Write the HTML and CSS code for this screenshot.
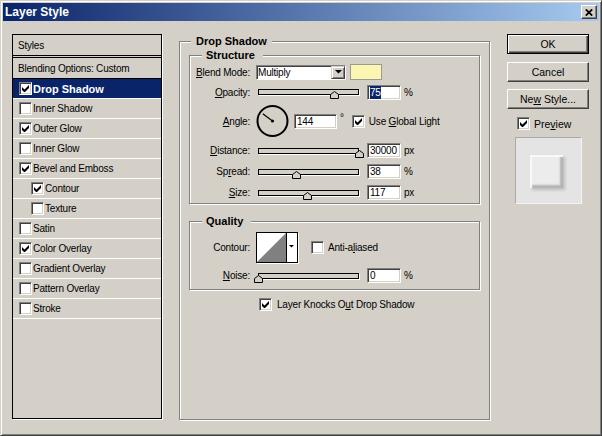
FILE: index.html
```html
<!DOCTYPE html>
<html>
<head>
<meta charset="utf-8">
<title>Layer Style</title>
<link rel="stylesheet" href="styles.css">
</head>
<body>
<div class="window">
  <div class="titlebar">
    <span class="title">Layer Style</span>
    <span class="closebtn"><svg width="8" height="7" viewBox="0 0 8 7"><path d="M0.8 0.4 L7.2 6.6 M7.2 0.4 L0.8 6.6" stroke="#000" stroke-width="1.8"/></svg></span>
  </div>
  <div class="content">
    <div class="list">
      <div class="li head">Styles</div>
      <div class="li blend">Blending Options: Custom</div>
      <div class="li sel"><span class="cb"><svg class="chk" width="7" height="7" viewBox="0 0 7 7"><path d="M0 2 L2.5 4.5 L7 0 L7 3 L2.5 7.5 L0 5 Z"/></svg></span><span>Drop Shadow</span></div>
      <div class="li"><span class="cb"></span><span>Inner Shadow</span></div>
      <div class="li"><span class="cb"><svg class="chk" width="7" height="7" viewBox="0 0 7 7"><path d="M0 2 L2.5 4.5 L7 0 L7 3 L2.5 7.5 L0 5 Z"/></svg></span><span>Outer Glow</span></div>
      <div class="li"><span class="cb"></span><span>Inner Glow</span></div>
      <div class="li"><span class="cb"><svg class="chk" width="7" height="7" viewBox="0 0 7 7"><path d="M0 2 L2.5 4.5 L7 0 L7 3 L2.5 7.5 L0 5 Z"/></svg></span><span>Bevel and Emboss</span></div>
      <div class="li sub"><span class="cb"><svg class="chk" width="7" height="7" viewBox="0 0 7 7"><path d="M0 2 L2.5 4.5 L7 0 L7 3 L2.5 7.5 L0 5 Z"/></svg></span><span>Contour</span></div>
      <div class="li sub"><span class="cb"></span><span>Texture</span></div>
      <div class="li"><span class="cb"></span><span>Satin</span></div>
      <div class="li"><span class="cb"><svg class="chk" width="7" height="7" viewBox="0 0 7 7"><path d="M0 2 L2.5 4.5 L7 0 L7 3 L2.5 7.5 L0 5 Z"/></svg></span><span>Color Overlay</span></div>
      <div class="li"><span class="cb"></span><span>Gradient Overlay</span></div>
      <div class="li"><span class="cb"></span><span>Pattern Overlay</span></div>
      <div class="li"><span class="cb"></span><span>Stroke</span></div>
    </div>

    <div class="group outer">
      <div class="legend">Drop Shadow</div>

      <div class="group inner structure">
        <div class="legend">Structure</div>
        <div class="rows">
          <div class="row h16">
            <span class="lbl"><u>B</u>lend Mode:</span>
            <div class="select"><span>Multiply</span><span class="dd"><svg width="7" height="4" viewBox="0 0 7 4"><path d="M0 0 H7 L3.5 3.5 Z"/></svg></span></div>
            <div class="swatch"></div>
          </div>
          <div class="row h16">
            <span class="lbl"><u>O</u>pacity:</span>
            <div class="slider"><div class="track"></div><svg class="thumb" style="left:75%" width="9" height="8" viewBox="0 0 9 8"><path d="M0.5 7.5 V3.5 L4.5 0.5 L8.5 3.5 V7.5 Z" fill="#d4d0c8" stroke="#000"/></svg></div>
            <div class="inp"><span class="hl">75</span></div>
            <span class="unit">%</span>
          </div>
          <div class="row h34">
            <span class="lbl"><u>A</u>ngle:</span>
            <svg class="dial" width="33" height="34" viewBox="0 0 33 34"><circle cx="16.5" cy="17" r="15" fill="none" stroke="#000" stroke-width="2"/><line x1="16.5" y1="17" x2="6.8" y2="9.8" stroke="#000" stroke-width="1.2"/><circle cx="16.5" cy="17" r="1.6"/></svg>
            <div class="inp wide">144</div>
            <span class="deg">°</span>
            <span class="cb gl"><svg class="chk" width="7" height="7" viewBox="0 0 7 7"><path d="M0 2 L2.5 4.5 L7 0 L7 3 L2.5 7.5 L0 5 Z"/></svg></span>
            <span class="cbtext">Use <u>G</u>lobal Light</span>
          </div>
          <div class="row h17">
            <span class="lbl"><u>D</u>istance:</span>
            <div class="slider"><div class="track"></div><svg class="thumb" style="left:100%" width="9" height="8" viewBox="0 0 9 8"><path d="M0.5 7.5 V3.5 L4.5 0.5 L8.5 3.5 V7.5 Z" fill="#d4d0c8" stroke="#000"/></svg></div>
            <div class="inp">30000</div>
            <span class="unit">px</span>
          </div>
          <div class="row h17">
            <span class="lbl">Sp<u>r</u>ead:</span>
            <div class="slider"><div class="track"></div><svg class="thumb" style="left:38%" width="9" height="8" viewBox="0 0 9 8"><path d="M0.5 7.5 V3.5 L4.5 0.5 L8.5 3.5 V7.5 Z" fill="#d4d0c8" stroke="#000"/></svg></div>
            <div class="inp">38</div>
            <span class="unit">%</span>
          </div>
          <div class="row h17">
            <span class="lbl"><u>S</u>ize:</span>
            <div class="slider"><div class="track"></div><svg class="thumb" style="left:49%" width="9" height="8" viewBox="0 0 9 8"><path d="M0.5 7.5 V3.5 L4.5 0.5 L8.5 3.5 V7.5 Z" fill="#d4d0c8" stroke="#000"/></svg></div>
            <div class="inp">117</div>
            <span class="unit">px</span>
          </div>
        </div>
      </div>

      <div class="group inner quality">
        <div class="legend">Quality</div>
        <div class="row h31 first">
          <span class="lbl">Contour:</span>
          <svg class="contour" width="42" height="31" viewBox="0 0 42 31"><rect x="0.5" y="0.5" width="41" height="30" fill="#fff" stroke="#000"/><path d="M1 30 L30 1 V30 Z" fill="#808080"/><line x1="30.5" y1="0" x2="30.5" y2="31" stroke="#000"/><path d="M33 13 H38 L35.5 15.5 Z"/></svg>
          <span class="cb aa"></span>
          <span class="cbtext">Anti-a<u>l</u>iased</span>
        </div>
        <div class="row h17 second">
          <span class="lbl"><u>N</u>oise:</span>
          <div class="slider"><div class="track"></div><svg class="thumb" style="left:0%" width="9" height="8" viewBox="0 0 9 8"><path d="M0.5 7.5 V3.5 L4.5 0.5 L8.5 3.5 V7.5 Z" fill="#d4d0c8" stroke="#000"/></svg></div>
          <div class="inp">0</div>
          <span class="unit">%</span>
        </div>
      </div>

      <div class="knock">
        <span class="cb"><svg class="chk" width="7" height="7" viewBox="0 0 7 7"><path d="M0 2 L2.5 4.5 L7 0 L7 3 L2.5 7.5 L0 5 Z"/></svg></span>
        <span class="cbtext k">Layer Knocks O<u>u</u>t Drop Shadow</span>
      </div>
    </div>

    <div class="side">
      <div class="btn default">OK</div>
      <div class="btn b2">Cancel</div>
      <div class="btn b3"><span>Ne<u>w</u>&nbsp;Style...</span></div>
      <div class="prevrow">
        <span class="cb"><svg class="chk" width="7" height="7" viewBox="0 0 7 7"><path d="M0 2 L2.5 4.5 L7 0 L7 3 L2.5 7.5 L0 5 Z"/></svg></span>
        <span class="cbtext">Pre<u>v</u>iew</span>
      </div>
      <div class="preview"><div class="pvsq"></div></div>
    </div>
  </div>
</div>
</body>
</html>
```

FILE: styles.css
```css
* { box-sizing: border-box; }
html, body { margin: 0; padding: 0; background: #d4d0c8; }
body {
  font-family: "Liberation Sans", Arial, sans-serif;
  font-size: 10px;
  letter-spacing: -0.2px;
  color: #000;
}
u { text-decoration: underline; text-underline-offset: 1px; }

.window {
  width: 602px;
  height: 436px;
  background: #d4d0c8;
  border: 1px solid;
  border-color: #d4d0c8 #404040 #404040 #d4d0c8;
  box-shadow: inset 1px 1px 0 #fff, inset -1px -1px 0 #808080;
  padding: 2px 2px 0 2px;
}

.titlebar {
  height: 18px;
  display: flex;
  align-items: center;
  justify-content: space-between;
  background: linear-gradient(to right, #0a246a, #a6caf0);
  padding: 0 2px;
}
.title { color: #fff; font-weight: bold; font-size: 12px; letter-spacing: 0; }
.closebtn {
  width: 16px; height: 14px;
  background: #d4d0c8;
  border: 1px solid;
  border-color: #fff #404040 #404040 #fff;
  box-shadow: inset -1px -1px 0 #808080;
  display: flex; align-items: center; justify-content: center;
}

.content { display: flex; align-items: flex-start; padding: 13px 0 0 9px; }

/* left list */
.list {
  flex: none;
  width: 150px; height: 385px;
  border: 1px solid #000;
  box-shadow: 1px 1px 0 #fff;
}
.li {
  height: 20px;
  display: flex; align-items: center;
  border-bottom: 1px solid #fff;
  padding-left: 6px;
}
.li.head { height: 21px; padding-left: 5px; border-bottom: 1px solid #000; }
.li.blend { height: 22px; margin-top: 1px; padding-left: 5px; border-top: 1px solid #000; border-bottom: 1px solid #000; }
.li.sel { background: #0a246a; color: #fff; font-weight: bold; font-size: 11px; letter-spacing: 0; }
.li.sub { padding-left: 18px; }
.li .cb { margin-right: 1px; }

.cb {
  flex: none;
  width: 13px; height: 13px;
  background: #fff;
  border: 1px solid;
  border-color: #808080 #fff #fff #808080;
  box-shadow: inset 1px 1px 0 #404040, inset -1px -1px 0 #d4d0c8;
  display: flex; align-items: center; justify-content: center;
}
.chk { display: block; }

/* group boxes */
.group {
  border: 1px solid #808080;
  box-shadow: inset 1px 1px 0 #fff, 1px 1px 0 #fff;
}
.legend {
  width: max-content;
  margin-top: -7px;
  background: #d4d0c8;
  font-weight: bold;
  font-size: 11px;
  line-height: 13px;
  letter-spacing: 0;
}
.outer {
  flex: none;
  margin: 7px 0 0 17px;
  width: 311px; height: 379px;
  padding: 0 9px;
}
.outer > .legend { margin-left: 2px; padding: 0 5px; }
.inner > .legend { margin-left: 12px; padding: 0 8px 0 4px; }
.structure { margin-top: 7px; padding-bottom: 2px; }
.quality { margin-top: 17px; padding-bottom: 5px; }

.rows { display: flex; flex-direction: column; gap: 4px; margin-top: 2px; }
.row { display: flex; align-items: center; }
.h16 { height: 16px; }
.h17 { height: 17px; }
.h31 { height: 31px; }
.h34 { height: 34px; }
.quality .first { margin-top: 4px; }
.quality .second { margin-top: 4px; }

.lbl { flex: none; width: 60px; text-align: right; white-space: nowrap; }

.select {
  flex: none;
  margin-left: 6px;
  width: 90px; height: 15px;
  background: #fff;
  border: 1px solid;
  border-color: #808080 #fff #fff #808080;
  box-shadow: inset 1px 1px 0 #404040;
  display: flex; align-items: center; justify-content: space-between;
  padding-left: 1px;
}
.dd {
  width: 14px; height: 13px;
  background: #d4d0c8;
  border: 1px solid;
  border-color: #d4d0c8 #404040 #404040 #d4d0c8;
  box-shadow: inset 1px 1px 0 #fff, inset -1px -1px 0 #808080;
  display: flex; align-items: center; justify-content: center;
}
.dd svg { display: block; }
.swatch {
  flex: none;
  margin-left: 4px;
  width: 32px; height: 16px;
  background: #fbf7b3;
  border: 1px solid #9a9a90;
}

.slider { position: relative; flex: none; width: 101px; height: 6px; margin-left: 8px; }
.track {
  height: 6px;
  border: 1px solid #000;
  background: #d4d0c8;
  box-shadow: 1px 1px 0 #fff;
}
.thumb { position: absolute; top: 2px; margin-left: -4px; display: block; }

.inp {
  flex: none;
  margin-left: 8px;
  width: 34px; height: 15px;
  background: #fff;
  border: 1px solid;
  border-color: #808080 #fff #fff #808080;
  box-shadow: inset 1px 1px 0 #404040, inset -1px -1px 0 #d4d0c8;
  padding-left: 2px;
  display: flex; align-items: center;
}
.inp.wide { width: 43px; margin-left: 5px; }
.hl { background: #0a246a; color: #fff; padding: 1px 0; }
.unit { margin-left: 3px; }

.dial { flex: none; margin-left: 6px; display: block; }
.deg { align-self: flex-start; margin-top: 8px; margin-left: 3px; }
.cb.gl { margin-left: 8px; }
.cbtext { margin-left: 4px; white-space: nowrap; }

.contour { flex: none; margin-left: 6px; display: block; box-shadow: 1px 1px 0 #fff; }
.cb.aa { margin-left: 13px; }

.knock { display: flex; align-items: center; margin: 8px 0 0 70px; height: 13px; }
.cbtext.k { margin-left: 5px; }

/* right side */
.side { flex: none; margin-left: 17px; width: 82px; display: flex; flex-direction: column; }
.btn {
  height: 20px;
  display: flex; align-items: center; justify-content: center;
  border: 1px solid;
  border-color: #fff #404040 #404040 #fff;
  box-shadow: inset -1px -1px 0 #808080;
  font-size: 10.5px;
  letter-spacing: 0;
}
.btn.default {
  border-color: #000;
  box-shadow: inset 1px 1px 0 #fff, inset -1px -1px 0 #404040, inset -2px -2px 0 #808080;
}
.btn.b2 { margin-top: 8px; }
.btn.b3 { margin-top: 7px; }
.prevrow { display: flex; align-items: center; margin: 8px 0 0 10px; height: 13px; font-size: 10.5px; letter-spacing: 0; }
.preview {
  margin: 7px 0 0 8px;
  width: 67px; height: 67px;
  background: #e4e4e4;
  border: 1px solid;
  border-color: #a8a8a8 #f4f4f4 #f4f4f4 #a8a8a8;
  padding: 17px 0 0 14px;
}
.pvsq {
  width: 33px; height: 33px;
  background: #ececec;
  box-shadow: inset 2px 2px 1px #fafafa, inset -3px -3px 2px #b4b4b4, 2px 2px 3px rgba(0,0,0,0.18);
}
```
